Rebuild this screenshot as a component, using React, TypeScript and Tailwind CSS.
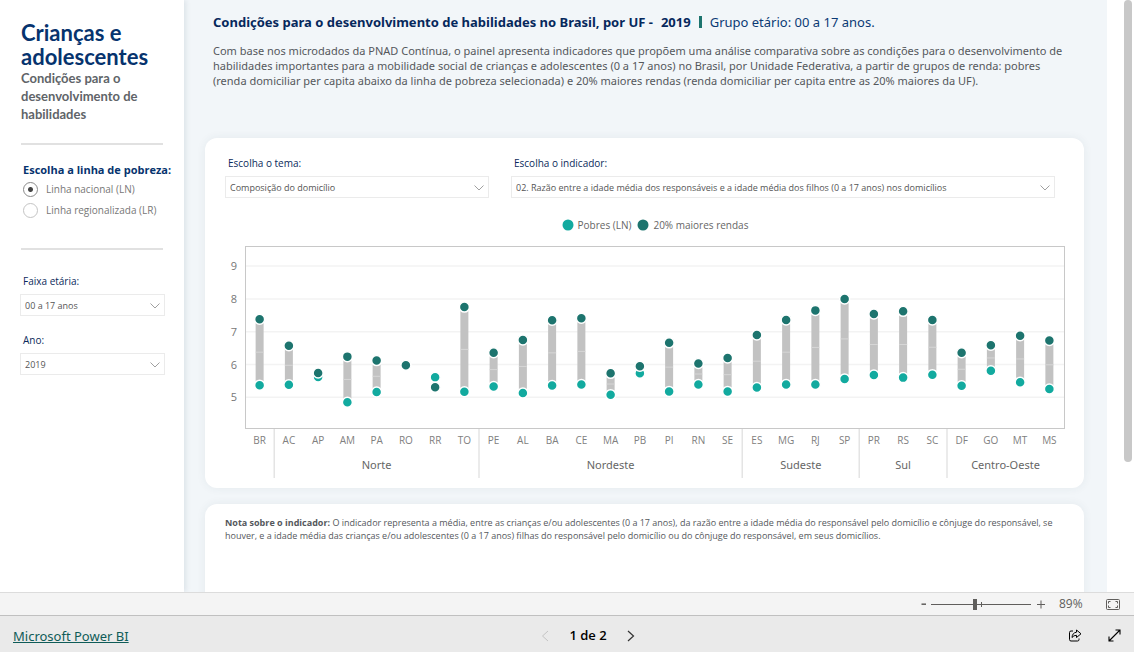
// ─── Painel: Condições para o desenvolvimento de habilidades ───
// Sidebar filters, dumbbell chart by UF and the viewer's bottom bars.

import { useState } from 'react';
import type { ReactNode } from 'react';

interface UfPoint {
  uf: string;
  pobres: number;
  ricos: number;
}

interface Region {
  name: string;
  points: UfPoint[];
}

const REGIONS: Region[] = [
  { name: '', points: [{ uf: 'BR', pobres: 5.37, ricos: 7.38 }] },
  {
    name: 'Norte',
    points: [
      { uf: 'AC', pobres: 5.38, ricos: 6.57 },
      { uf: 'AP', pobres: 5.62, ricos: 5.74 },
      { uf: 'AM', pobres: 4.85, ricos: 6.24 },
      { uf: 'PA', pobres: 5.16, ricos: 6.12 },
      { uf: 'RO', pobres: 5.98, ricos: 5.98 },
      { uf: 'RR', pobres: 5.61, ricos: 5.31 },
      { uf: 'TO', pobres: 5.17, ricos: 7.75 },
    ],
  },
  {
    name: 'Nordeste',
    points: [
      { uf: 'PE', pobres: 5.33, ricos: 6.36 },
      { uf: 'AL', pobres: 5.13, ricos: 6.75 },
      { uf: 'BA', pobres: 5.36, ricos: 7.35 },
      { uf: 'CE', pobres: 5.39, ricos: 7.41 },
      { uf: 'MA', pobres: 5.08, ricos: 5.73 },
      { uf: 'PB', pobres: 5.73, ricos: 5.95 },
      { uf: 'PI', pobres: 5.18, ricos: 6.66 },
      { uf: 'RN', pobres: 5.39, ricos: 6.03 },
      { uf: 'SE', pobres: 5.18, ricos: 6.2 },
    ],
  },
  {
    name: 'Sudeste',
    points: [
      { uf: 'ES', pobres: 5.3, ricos: 6.9 },
      { uf: 'MG', pobres: 5.39, ricos: 7.36 },
      { uf: 'RJ', pobres: 5.39, ricos: 7.65 },
      { uf: 'SP', pobres: 5.56, ricos: 8.0 },
    ],
  },
  {
    name: 'Sul',
    points: [
      { uf: 'PR', pobres: 5.68, ricos: 7.54 },
      { uf: 'RS', pobres: 5.6, ricos: 7.62 },
      { uf: 'SC', pobres: 5.69, ricos: 7.36 },
    ],
  },
  {
    name: 'Centro-Oeste',
    points: [
      { uf: 'DF', pobres: 5.35, ricos: 6.36 },
      { uf: 'GO', pobres: 5.81, ricos: 6.59 },
      { uf: 'MT', pobres: 5.46, ricos: 6.88 },
      { uf: 'MS', pobres: 5.25, ricos: 6.73 },
    ],
  },
];

const LINES = [
  { id: 'ln', label: 'Linha nacional (LN)' },
  { id: 'lr', label: 'Linha regionalizada (LR)' },
];

const TEAL = '#12aa9f';
const DARK_TEAL = '#1d746e';

function Dropdown({ id, label, options }: { id: string; label: string; options: string[] }) {
  return (
    <div className="flex flex-col gap-[3px]">
      <label htmlFor={id} className="pl-[3px] text-[10px] leading-5 text-[#0b2a5b]">
        {label}
      </label>
      <div className="relative">
        <select
          id={id}
          className="block h-[22px] w-full appearance-none truncate border border-[#ebebeb] bg-white pt-0.5 pr-6 pl-1 text-[9px] text-[#555]"
        >
          {options.map((o) => (
            <option key={o}>{o}</option>
          ))}
        </select>
        <svg
          viewBox="0 0 10 6"
          className="pointer-events-none absolute top-[9px] right-[5px] h-[6px] w-[10px]"
          fill="none"
          stroke="#a0a0a0"
        >
          <path d="M0.5 0.5 L5 5 L9.5 0.5" />
        </svg>
      </div>
    </div>
  );
}

function Dumbbell({ x, point, scaleY }: { x: number; point: UfPoint; scaleY: (v: number) => number }) {
  const yPobres = scaleY(point.pobres);
  const yRicos = scaleY(point.ricos);
  const mid = (yPobres + yRicos) / 2;
  return (
    <g>
      {point.ricos > point.pobres && (
        <>
          <rect x={x - 4} y={yRicos} width={8} height={yPobres - yRicos} fill="#c2c2c2" />
          <line x1={x - 4} x2={x + 4} y1={mid} y2={mid} stroke="#d6d6d6" />
        </>
      )}
      <circle cx={x} cy={yPobres} r={5} fill={TEAL} stroke="#fff" strokeWidth={1.5} />
      <circle cx={x} cy={yRicos} r={5} fill={DARK_TEAL} stroke="#fff" strokeWidth={1.5} />
    </g>
  );
}

// Coordinates are in viewBox units: plot frame on top, category bands below.
function DumbbellChart() {
  const left = 20;
  const right = 839;
  const top = 1;
  const bottom = 183;
  const step = (right - left) / 28;
  const scaleY = (v: number) => 151.3 - (v - 5) * 32.8;

  let index = 0;
  const bands = REGIONS.map((region) => {
    const start = index;
    index += region.points.length;
    return { ...region, start, end: index };
  });

  return (
    <svg viewBox="0 0 840 234" className="block w-full" role="img" aria-label="Indicador por UF">
      {[5, 6, 7, 8, 9].map((tick) => (
        <g key={tick}>
          <line x1={left} x2={right} y1={scaleY(tick)} y2={scaleY(tick)} stroke="#f3f3f3" strokeWidth={1.5} />
          <text x={12} y={scaleY(tick) + 4} textAnchor="end" fontSize={11} fill="#777">
            {tick}
          </text>
        </g>
      ))}
      <rect
        x={left + 0.5}
        y={top - 0.5}
        width={right - left}
        height={bottom - top}
        fill="none"
        stroke="#c8c8c8"
      />
      {bands.map((band) => (
        <g key={band.start}>
          {band.start > 0 && (
            <line
              x1={left + band.start * step}
              x2={left + band.start * step}
              y1={bottom}
              y2={232}
              stroke="#e4e4e4"
              strokeWidth={1.5}
            />
          )}
          <text
            x={left + ((band.start + band.end) / 2) * step}
            y={223}
            textAnchor="middle"
            fontSize={11}
            fill="#666"
            className="font-['Noto_Sans',sans-serif]"
          >
            {band.name}
          </text>
          {band.points.map((p, i) => {
            const x = left + (band.start + i + 0.5) * step;
            return (
              <g key={p.uf}>
                <Dumbbell x={x} point={p} scaleY={scaleY} />
                <text x={x} y={198} textAnchor="middle" fontSize={10} fill="#808080">
                  {p.uf}
                </text>
              </g>
            );
          })}
        </g>
      ))}
    </svg>
  );
}

function Card({ children, className }: { children: ReactNode; className: string }) {
  return (
    <section className={`rounded-xl bg-white shadow-[0_0_10px_rgba(40,70,90,0.07)] ${className}`}>
      {children}
    </section>
  );
}

function Sidebar() {
  const [line, setLine] = useState('ln');

  return (
    <aside className="z-10 w-[184px] shrink-0 bg-white pt-[21px] pr-[19px] pl-5 shadow-[2px_0_5px_rgba(40,70,90,0.1)]">
      <div className="pl-px font-['Lato',sans-serif]">
        <h1 className="text-[22px] leading-6 font-bold text-[#06336e]">
          Crianças e adolescentes
        </h1>
        <h2 className="text-[13px] leading-[18px] font-bold text-[#606468]">
          Condições para o desenvolvimento de habilidades
        </h2>
      </div>

      <hr className="mt-5 mr-0.5 ml-px border-t-2 border-[#e1e1e1]" />

      <fieldset className="mt-4 -mr-4 pl-[3px]">
        <legend className="text-[11px] leading-[18px] font-bold text-[#06336e]">
          Escolha a linha de pobreza:
        </legend>
        {LINES.map((l) => (
          <label key={l.id} className="flex h-[21px] items-center gap-2 text-[10px] text-[#777]">
            <input
              type="radio"
              name="linha"
              checked={line === l.id}
              onChange={() => setLine(l.id)}
              className="size-[15px] appearance-none rounded-full border border-[#c4c4c4] checked:border-[#8a8a8a] checked:bg-[radial-gradient(circle,#444_2px,transparent_3px)]"
            />
            {l.label}
          </label>
        ))}
      </fieldset>

      <hr className="mt-[27px] mr-0.5 ml-px border-t-2 border-[#e1e1e1]" />

      <div className="mt-[21px] flex flex-col gap-[14px]">
        <Dropdown id="faixa" label="Faixa etária:" options={['00 a 17 anos']} />
        <Dropdown id="ano" label="Ano:" options={['2019']} />
      </div>
    </aside>
  );
}

function LegendItem({ color, label }: { color: string; label: string }) {
  return (
    <span className="flex items-center gap-1">
      <svg viewBox="0 0 12 12" className="size-3">
        <circle cx={6} cy={6} r={5.5} fill={color} />
      </svg>
      {label}
    </span>
  );
}

function Report() {
  return (
    <main className="min-w-0 flex-1 bg-[#f2f6f9] pr-[23px] pl-[21px]">
      <header className="h-[138px] px-2 pt-3 font-['Noto_Sans',sans-serif]">
        <p className="flex items-center gap-2 text-[13px] leading-5 text-[#0b3a75]">
          <strong className="font-bold text-[#06285c]">
            Condições para o desenvolvimento de habilidades no Brasil, por UF -
          </strong>
          <strong className="font-bold text-[#06285c]">2019</strong>
          <span className="h-3 w-[3px] bg-[#1d746e]" />
          <span>Grupo etário: 00 a 17 anos.</span>
        </p>
        <p className="mt-[11px] text-[11px] leading-[15px] text-[#55585c]">
          Com base nos microdados da PNAD Contínua, o painel apresenta indicadores que propõem uma
          análise comparativa sobre as condições para o desenvolvimento de habilidades importantes
          para a mobilidade social de crianças e adolescentes (0 a 17 anos) no Brasil, por Unidade
          Federativa, a partir de grupos de renda: pobres (renda domiciliar per capita abaixo da
          linha de pobreza selecionada) e 20% maiores rendas (renda domiciliar per capita entre as
          20% maiores da UF).
        </p>
      </header>

      <Card className="pt-[15px] pr-[19px] pb-2 pl-5">
        <div className="grid grid-cols-[264fr_544fr] gap-[22px] pr-[10px]">
          <Dropdown id="tema" label="Escolha o tema:" options={['Composição do domicílio']} />
          <Dropdown
            id="indicador"
            label="Escolha o indicador:"
            options={[
              '02. Razão entre a idade média dos responsáveis e a idade média dos filhos (0 a 17 anos) nos domicílios',
            ]}
          />
        </div>
        <div className="mt-[17px] mb-[11px] flex h-5 justify-center gap-1.5 pl-5 text-[10px] text-[#666]">
          <LegendItem color={TEAL} label="Pobres (LN)" />
          <LegendItem color={DARK_TEAL} label="20% maiores rendas" />
        </div>
        <DumbbellChart />
      </Card>

      <Card className="mt-4 h-40 px-5 pt-3">
        <p className="text-[9px] leading-[13px] text-[#55585c]">
          <strong className="font-bold">Nota sobre o indicador:</strong> O indicador representa a
          média, entre as crianças e/ou adolescentes (0 a 17 anos), da razão entre a idade média do
          responsável pelo domicílio e cônjuge do responsável, se houver, e a idade média das
          crianças e/ou adolescentes (0 a 17 anos) filhas do responsável pelo domicílio ou do
          cônjuge do responsável, em seus domicílios.
        </p>
      </Card>
    </main>
  );
}

function ZoomBar() {
  return (
    <div className="flex h-[23px] shrink-0 items-center justify-end gap-1 border-t border-[#dcdcdc] bg-[#f4f4f4] pr-[14px] text-[#605e5c]">
      <button aria-label="Reduzir" className="flex size-3 items-center justify-center">
        <svg viewBox="0 0 12 12" className="size-3" stroke="currentColor" strokeWidth={1.5}>
          <path d="M6.500 6.200 H11" />
        </svg>
      </button>
      <div className="relative flex items-center">
        <input
          type="range"
          aria-label="Zoom"
          defaultValue={44}
          className="h-3 w-[100px] appearance-none bg-[linear-gradient(#605e5c,#605e5c)] bg-[length:100%_1px] bg-center bg-no-repeat [&::-webkit-slider-thumb]:h-[11px] [&::-webkit-slider-thumb]:w-1 [&::-webkit-slider-thumb]:appearance-none [&::-webkit-slider-thumb]:bg-[#605e5c]"
        />
        <span className="pointer-events-none absolute left-[50px] h-[5px] w-px bg-[#605e5c]" />
      </div>
      <button aria-label="Ampliar" className="flex size-3 items-center justify-center">
        <svg viewBox="0 0 12 12" className="size-3" stroke="currentColor">
          <path d="M2 6.5 H10 M6 2.5 V10.5" />
        </svg>
      </button>
      <span className="ml-2 w-[43px] text-[12px]">89%</span>
      <button aria-label="Ajustar à página">
        <svg viewBox="0 0 14 11" className="h-[11px] w-[14px]" fill="none" stroke="currentColor">
          <rect x={0.5} y={0.5} width={13} height={10} rx={1} />
          <path d="M2.5 4.5 V2.5 H4.5 M9.5 2.5 H11.5 V4.5 M2.5 6.5 V8.5 H4.5 M9.5 8.5 H11.5 V6.5" />
        </svg>
      </button>
    </div>
  );
}

function FooterBar() {
  return (
    <footer className="grid h-[37px] shrink-0 grid-cols-3 items-center border-t border-[#c0c0c0] bg-[#eaeaea] px-[13px] pt-[3px] text-black">
      <a
        href="https://powerbi.microsoft.com"
        className="justify-self-start font-['Noto_Sans',sans-serif] text-[13px] leading-4 text-[#0f5c58] underline"
      >
        Microsoft Power BI
      </a>
      <nav className="flex items-center justify-center gap-4 pl-[42px]">
        <button aria-label="Página anterior" disabled className="text-[#c4c4c4]">
          <svg viewBox="0 0 8 12" className="h-3 w-2" fill="none" stroke="currentColor">
            <path d="M7 1 L1.5 6 L7 11" />
          </svg>
        </button>
        <span className="px-1 text-[13px] font-semibold">1 de 2</span>
        <button aria-label="Próxima página" className="text-[#333]">
          <svg viewBox="0 0 8 12" className="h-3 w-2" fill="none" stroke="currentColor" strokeWidth={1.2}>
            <path d="M1 1 L6.5 6 L1 11" />
          </svg>
        </button>
      </nav>
      <div className="flex items-center justify-end gap-[26px]">
        <button aria-label="Compartilhar">
          <svg viewBox="0 0 14 13" className="h-[13px] w-[14px]" fill="none" stroke="currentColor" strokeLinejoin="round">
            <path d="M5 2 H3 Q1.500 2 1.500 3.500 V10.500 Q1.500 12 3 12 H9.500 Q11 12 11 10.500 V9.500" />
            <path d="M8.500 1 L13 4.800 L8.500 8.500 V6.300 Q5.500 6.300 4 8.500 Q4.300 3.800 8.500 3.200 Z" />
          </svg>
        </button>
        <button aria-label="Tela cheia">
          <svg viewBox="0 0 13 13" className="size-[13px]" fill="none" stroke="currentColor" strokeWidth={1.1}>
            <path d="M1 12 L12 1 M7.5 1 H12 V5.5 M1 7.5 V12 H5.5" />
          </svg>
        </button>
      </div>
    </footer>
  );
}

export default function App() {
  return (
    <div className="flex h-screen flex-col overflow-hidden bg-white font-['Open_Sans',sans-serif]">
      <div className="flex min-h-0 flex-1 overflow-hidden">
        <Sidebar />
        <Report />
        <div className="flex w-[27px] shrink-0 justify-end bg-white pr-0.5">
          <div className="h-[78%] w-2 rounded-full bg-[#c8c8c8]" />
        </div>
      </div>
      <ZoomBar />
      <FooterBar />
    </div>
  );
}
